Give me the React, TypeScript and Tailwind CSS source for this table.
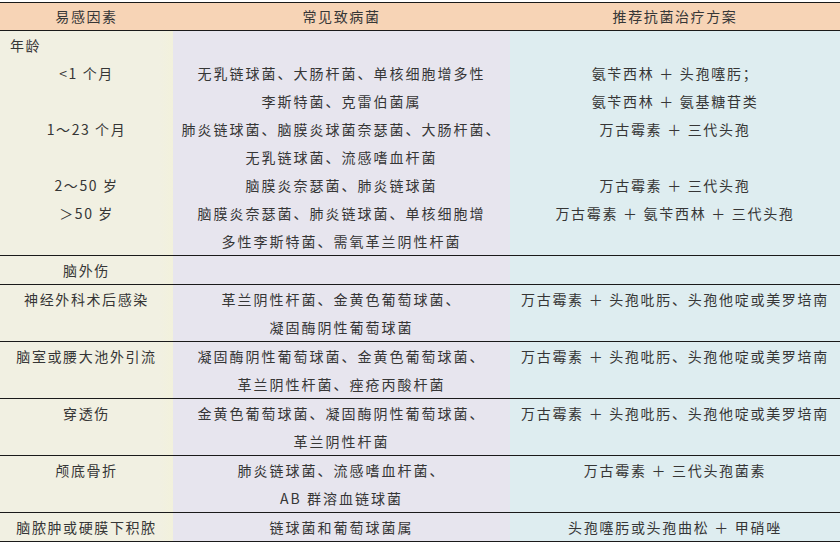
import React from 'react';

type Row = {
  factor: string[];
  germs: string[];
  therapy: string[];
  lines: number;
};

// other rows: factor and therapy sit on the first line, germs may wrap to two
const ROWS: Row[] = [
  { factor: ['脑外伤'], germs: [], therapy: [], lines: 1 },
  {
    factor: ['神经外科术后感染'],
    germs: ['革兰阴性杆菌、金黄色葡萄球菌、', '凝固酶阴性葡萄球菌'],
    therapy: ['万古霉素 ＋ 头孢吡肟、头孢他啶或美罗培南'],
    lines: 2,
  },
  {
    factor: ['脑室或腰大池外引流'],
    germs: ['凝固酶阴性葡萄球菌、金黄色葡萄球菌、', '革兰阴性杆菌、痤疮丙酸杆菌'],
    therapy: ['万古霉素 ＋ 头孢吡肟、头孢他啶或美罗培南'],
    lines: 2,
  },
  {
    factor: ['穿透伤'],
    germs: ['金黄色葡萄球菌、凝固酶阴性葡萄球菌、', '革兰阴性杆菌'],
    therapy: ['万古霉素 ＋ 头孢吡肟、头孢他啶或美罗培南'],
    lines: 2,
  },
  {
    factor: ['颅底骨折'],
    germs: ['肺炎链球菌、流感嗜血杆菌、', 'AB 群溶血链球菌'],
    therapy: ['万古霉素 ＋ 三代头孢菌素'],
    lines: 2,
  },
  {
    factor: ['脑脓肿或硬膜下积脓'],
    germs: ['链球菌和葡萄球菌属'],
    therapy: ['头孢噻肟或头孢曲松 ＋ 甲硝唑'],
    lines: 1,
  },
];

// age block: eight lines, one entry per line in each column
const AGE_LINES: [string, string, string][] = [
  ['', '', ''],
  ['<1 个月', '无乳链球菌、大肠杆菌、单核细胞增多性', '氨苄西林 ＋ 头孢噻肟；'],
  ['', '李斯特菌、克雷伯菌属', '氨苄西林 ＋ 氨基糖苷类'],
  ['1～23 个月', '肺炎链球菌、脑膜炎球菌奈瑟菌、大肠杆菌、', '万古霉素 ＋ 三代头孢'],
  ['', '无乳链球菌、流感嗜血杆菌', ''],
  ['2～50 岁', '脑膜炎奈瑟菌、肺炎链球菌', '万古霉素 ＋ 三代头孢'],
  ['＞50 岁', '脑膜炎奈瑟菌、肺炎链球菌、单核细胞增', '万古霉素 ＋ 氨苄西林 ＋ 三代头孢'],
  ['', '多性李斯特菌、需氧革兰阴性杆菌', ''],
];

const col1 = 'w-[173px] shrink-0 bg-[linear-gradient(to_right,#f1f0e2_92%,#f2f1dc)]';
const col2 = 'w-[337px] shrink-0 bg-[#e7e5ee] tracking-[2px]';
const col3 = 'flex-1 bg-[#deedf0] tracking-[1.7px]';

function Line({ text }: { text: string }) {
  return <div className="h-[28px] leading-[28px] whitespace-nowrap">{text || '\u00a0'}</div>;
}

export default function App() {
  return (
    <div
      className="w-[840px] h-[547px] bg-white pt-[2px] text-[14px] tracking-[1.6px] text-[#363636]"
      style={{ fontFamily: '"Noto Sans CJK SC", "Noto Sans", sans-serif' }}
    >
      <div className="border-t-[1.5px] border-b-[1.5px] border-[#1a1a1a] bg-[#f7d4b6] flex h-[29px] items-center text-center">
        <div className="w-[173px] shrink-0">易感因素</div>
        <div className="w-[337px] shrink-0">常见致病菌</div>
        <div className="flex-1">推荐抗菌治疗方案</div>
      </div>

      <div className="flex border-b border-[#1a1a1a] text-center">
        <div className={col1}>
          {AGE_LINES.map((l, i) =>
            i === 0 ? (
              <div key={i} className="h-[28px] leading-[28px] text-left pl-[10px]">年龄</div>
            ) : (
              <Line key={i} text={l[0]} />
            )
          )}
        </div>
        <div className={col2}>
          {AGE_LINES.map((l, i) => <Line key={i} text={l[1]} />)}
        </div>
        <div className={col3}>
          {AGE_LINES.map((l, i) => <Line key={i} text={l[2]} />)}
        </div>
      </div>

      {ROWS.map((r, i) => (
        <div key={i} className="flex border-b border-[#1a1a1a] text-center">
          <div className={col1}>
            {Array.from({ length: r.lines }).map((_, j) => <Line key={j} text={r.factor[j] ?? ''} />)}
          </div>
          <div className={col2}>
            {Array.from({ length: r.lines }).map((_, j) => <Line key={j} text={r.germs[j] ?? ''} />)}
          </div>
          <div className={col3}>
            {Array.from({ length: r.lines }).map((_, j) => <Line key={j} text={r.therapy[j] ?? ''} />)}
          </div>
        </div>
      ))}
    </div>
  );
}
